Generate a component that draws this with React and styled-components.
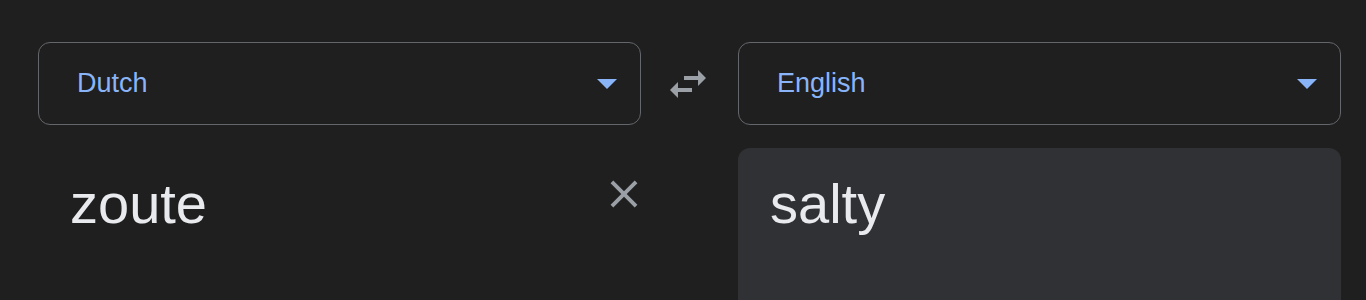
import React from 'react';
import styled, { createGlobalStyle } from 'styled-components';

const GlobalStyle = createGlobalStyle`
  html, body {
    margin: 0;
    background: #1f1f1f;
    font-family: "Liberation Sans", Arial, sans-serif;
  }
`;

const Page = styled.main`
  height: 300px;
  overflow: hidden;
  padding: 42px 0 0 38px;
  box-sizing: border-box;
  display: grid;
  grid-template-columns: 603px 97px 603px;
  grid-template-rows: 83px auto;
  row-gap: 23px;
`;

const Select = styled.div`
  box-sizing: border-box;
  height: 83px;
  border: 1px solid #63666b;
  border-radius: 12px;
  display: flex;
  align-items: center;
  justify-content: space-between;
  padding: 0 23px 0 38px;
  color: #8ab4f8;
  font-size: 27px;
  cursor: pointer;
`;

const Caret = styled.span`
  width: 0;
  height: 0;
  border-left: 10.5px solid transparent;
  border-right: 10.5px solid transparent;
  border-top: 10px solid #8ab4f8;
  margin-top: 1px;
`;

const SwapButton = styled.button`
  all: unset;
  display: flex;
  align-items: center;
  justify-content: center;
  color: #9aa0a6;
  cursor: pointer;
  padding-right: 3px;
`;

const Panel = styled.div`
  box-sizing: border-box;
  height: 200px;
  border-radius: 12px;
  background: ${p => (p.$output ? '#303134' : 'transparent')};
  padding: 24px 32px;
  display: flex;
  justify-content: space-between;
  align-items: flex-start;
`;

const Text = styled.div`
  color: #e8eaed;
  font-size: 56px;
  line-height: 64px;
`;

const ClearButton = styled.button`
  all: unset;
  color: #9aa0a6;
  display: flex;
  margin: -1px -38px 0 0;
  cursor: pointer;
`;

const SwapIcon = () => (
  <svg width="48" height="48" viewBox="0 0 24 24" fill="currentColor">
    <path d="M6.99 11L3 15l3.99 4v-3H14v-2H6.99v-3zM21 9l-3.99-4v3H10v2h7.01v3L21 9z" />
  </svg>
);

const CloseIcon = () => (
  <svg width="46" height="46" viewBox="0 0 24 24" fill="currentColor">
    <path d="M19 6.41L17.59 5 12 10.59 6.41 5 5 6.41 10.59 12 5 17.59 6.41 19 12 13.41 17.59 19 19 17.59 13.41 12z" />
  </svg>
);

export default function App() {
  return (
    <>
      <GlobalStyle />
      <Page>
        <Select>
          Dutch
          <Caret />
        </Select>
        <SwapButton aria-label="Swap languages">
          <SwapIcon />
        </SwapButton>
        <Select>
          English
          <Caret />
        </Select>

        <Panel>
          <Text>zoute</Text>
          <ClearButton aria-label="Clear source text">
            <CloseIcon />
          </ClearButton>
        </Panel>
        <div />
        <Panel $output>
          <Text>salty</Text>
        </Panel>
      </Page>
    </>
  );
}
